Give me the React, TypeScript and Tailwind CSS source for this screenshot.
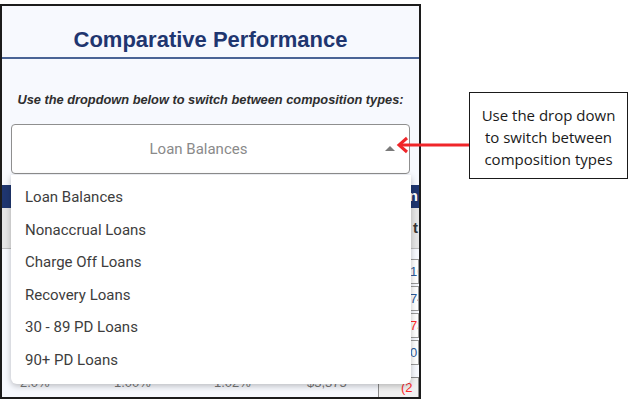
import React from "react";

const items = [
  "Loan Balances",
  "Nonaccrual Loans",
  "Charge Off Loans",
  "Recovery Loans",
  "30 - 89 PD Loans",
  "90+ PD Loans",
];

const rows = [
  { v: "16", red: false },
  { v: "74", red: false },
  { v: "73", red: true },
  { v: "0", red: false },
];

export default function App() {
  return (
    <div className="relative w-[630px] h-[403px] bg-white overflow-hidden font-['Liberation_Sans',Arial,sans-serif]">
      {/* Screenshot panel */}
      <div className="absolute left-0 top-[4px] w-[421px] h-[395px] border-2 border-[#1c1c1c] bg-[#f7f9fe] overflow-hidden flex flex-col">
        <div className="h-[51px] pt-[17px] flex items-center justify-center">
          <span className="text-[22px] leading-[34px] font-bold text-[#1f3670]">
            Comparative Performance
          </span>
        </div>
        <div className="h-[2px] bg-[#4a6496]" />
        <div className="mt-[33px] text-center text-[12.8px] leading-[16px] font-bold italic text-[#2e2e2e] whitespace-nowrap">
          Use the dropdown below to switch between composition types:
        </div>
        <div className="mt-[16px] mx-[9px] h-[50px] border border-[#8f8f8f] rounded-[4px] bg-white flex items-center justify-center relative pr-[24px]">
          <span className="text-[15px] text-[#8a8a8a] font-['Roboto',sans-serif]">Loan Balances</span>
          <div className="absolute right-[14px] top-[21px] w-0 h-0 border-l-[5px] border-r-[5px] border-b-[5px] border-l-transparent border-r-transparent border-b-[#7a7a7a]" />
        </div>

        {/* background table */}
        <div className="mt-[11px] h-[23px] bg-[#1f3670] flex justify-end items-center pr-[1px]">
          <span className="text-white font-bold text-[15px]">n</span>
        </div>
        <div className="h-[41px] bg-[#e5e5e5] border-b border-[#bdbdbd] flex justify-end items-center">
          <span className="text-[#333] font-bold text-[15px] pr-[1px]">t</span>
        </div>
        <div className="flex flex-col pt-[10px]">
          {rows.map((r, i) => (
            <div key={i} className="h-[27px] flex justify-end">
              <div className="w-[41px] h-[25px] border border-[#9a9a9a] bg-white flex items-center pl-[31px] text-[13px] overflow-hidden whitespace-nowrap">
                <span className={r.red ? "text-[#ff2a2a]" : "text-[#2b5a9a]"}>{r.v}</span>
              </div>
            </div>
          ))}
          <div className="h-[30px] text-[13px] text-[#777] relative">
            <span className="absolute left-[18px] top-[6px]">2.0%</span>
            <span className="absolute left-[112px] top-[6px]">1.00%</span>
            <span className="absolute left-[212px] top-[6px]">1.02%</span>
            <span className="absolute left-[305px] top-[6px]">$3,375</span>
            <div className="absolute right-0 top-[10px] w-[41px] h-[22px] border border-[#8a8a8a] bg-[#f1f1f1] flex items-center pl-[22px] overflow-hidden whitespace-nowrap">
              <span className="text-[#ff2a2a]">(2</span>
            </div>
          </div>
        </div>

        {/* Dropdown menu */}
        <div className="absolute left-[9px] top-[169px] w-[400px] h-[209px] bg-white rounded-b-[6px] shadow-[0_2px_6px_rgba(0,0,0,0.25)] pt-[6px] font-['Roboto',sans-serif]">
          {items.map((t) => (
            <div key={t} className="h-[32.6px] flex items-center pl-[14px] text-[15px] text-[#3d3d3d]">
              {t}
            </div>
          ))}
        </div>
      </div>

      {/* Arrow */}
      <svg className="absolute left-[395px] top-[135px]" width="76" height="20" viewBox="0 0 76 20">
        <line x1="5" y1="10" x2="75" y2="10" stroke="#f0262a" strokeWidth="3" />
        <polyline points="12,3 4,10 12,17" fill="none" stroke="#f0262a" strokeWidth="3" strokeLinejoin="miter" />
      </svg>

      {/* Annotation box */}
      <div className="absolute left-[469px] top-[92px] w-[159px] h-[87px] border border-[#1a1a1a] bg-white flex items-center justify-center text-center text-[15px] leading-[22px] text-[#1a1a1a] font-['Open_Sans',sans-serif] pt-[3px]">
        <div>
          Use the drop down
          <br />
          to switch between
          <br />
          composition types
        </div>
      </div>
    </div>
  );
}
